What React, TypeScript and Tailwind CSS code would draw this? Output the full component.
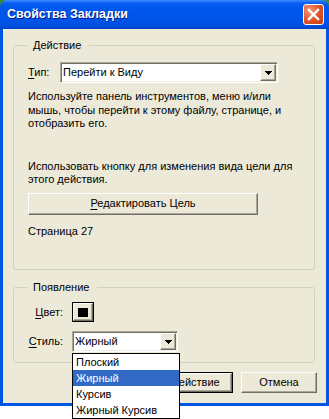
import type { ReactNode } from "react"

const raised =
  "border border-t-white border-l-white border-b-[#716F64] border-r-[#716F64] shadow-[inset_-1px_-1px_#ACA899] bg-[#ECE9D8]"
const sunken =
  "border border-t-[#ACA899] border-l-[#ACA899] border-b-white border-r-white shadow-[inset_1px_1px_#716F64,inset_-1px_-1px_#F1EFE2]"

const DownArrow = () => (
  <svg width="7" height="4" viewBox="0 0 7 4" shapeRendering="crispEdges" fill="#000">
    <rect x="0" y="0" width="7" height="1" />
    <rect x="1" y="1" width="5" height="1" />
    <rect x="2" y="2" width="3" height="1" />
    <rect x="3" y="3" width="1" height="1" />
  </svg>
)

const ComboBox = ({ value, className }: { value: string; className: string }) => (
  <div className={`${sunken} flex bg-white ${className}`}>
    <span className="flex flex-1 items-center pl-[2px]">{value}</span>
    <span className={`${raised} my-[1px] mr-[1px] flex w-[16px] items-center justify-center`}>
      <DownArrow />
    </span>
  </div>
)

// group box: the caption sits on the top border line
const GroupBox = ({ title, className, children }: { title: string; className: string; children: ReactNode }) => (
  <div className={`mr-[2px] rounded-[3px] border border-[#D0D0BF] pl-[14px] ${className}`}>
    <div className="-ml-[1px] -mt-[7px] w-fit bg-[#ECE9D8] pl-[6px] pr-[8px] leading-[13px]">{title}</div>
    {children}
  </div>
)

const Accel = ({ children }: { children: string }) => <span className="underline underline-offset-[2px]">{children}</span>

export default function App() {
  return (
    <div className="relative h-[419px] w-[329px] overflow-hidden bg-[linear-gradient(#3d8c34_0_8px,#ffffff_8px)] font-['Liberation_Sans',Arial,sans-serif] text-[11px] leading-[13px] text-black">
      <div className="flex flex-col">
        <div className="flex h-[29px] items-center rounded-t-[7px] bg-[linear-gradient(180deg,#3b8dff_0px,#0a61f2_3px,#0058ee_6px,#0055ea_60%,#0050e2_88%,#0043c9_100%)] pl-[7px] pr-[5px]">
          <span className="text-[12.5px] font-bold text-white [text-shadow:1px_1px_#0a1883]">Свойства Закладки</span>
          <span className="ml-auto flex h-[21px] w-[21px] items-center justify-center rounded-[3px] border border-white bg-[radial-gradient(circle_at_30%_30%,#f39a78,#dd5226_55%,#c13a12)]">
            <svg width="13" height="13" viewBox="0 0 13 13">
              <path d="M2 2 11 11M11 2 2 11" stroke="#fff" strokeWidth="2.4" strokeLinecap="square" />
            </svg>
          </span>
        </div>

        <div className="border-x-[3px] border-b-[3px] border-[#0055e5] bg-[#ECE9D8] pb-[10px] pl-[10px] pr-[9px] pt-[16px]">
          <GroupBox title="Действие" className="pb-[31px]">
            <div className="mt-[10px] flex items-center">
              <span className="w-[32px]">
                <Accel>Т</Accel>ип:
              </span>
              <ComboBox value="Перейти к Виду" className="h-[21px] w-[218px]" />
            </div>
            <p className="mt-[7px] whitespace-nowrap leading-[13.5px]">
              Используйте панель инструментов, меню и/или
              <br />
              мышь, чтобы перейти к этому файлу, странице, и
              <br />
              отобразить его.
            </p>
            <p className="mt-[29px] whitespace-nowrap leading-[13.5px]">
              Использовать кнопку для изменения вида цели для
              <br />
              этого действия.
            </p>
            <div className={`${raised} mt-[6px] flex h-[22px] w-[230px] items-center justify-center`}>
              <span>
                <Accel>Р</Accel>едактировать Цель
              </span>
            </div>
            <p className="mt-[10px] leading-[13.5px]">Страница 27</p>
          </GroupBox>

          <GroupBox title="Появление" className="mt-[17px] pb-[10px]">
            <div className="mt-[8px] flex items-center">
              <span className="w-[44px] pr-[9px] text-right">
                <Accel>Ц</Accel>вет:
              </span>
              <div className="flex h-[20px] w-[22px] border border-black">
                <div className={`${raised} flex flex-1 items-center justify-center`}>
                  <span className="h-[9px] w-[10px] bg-black" />
                </div>
              </div>
            </div>
            <div className="mt-[9px] flex items-center">
              <span className="w-[44px] pr-[9px] text-right">
                <Accel>С</Accel>тиль:
              </span>
              <ComboBox value="Жирный" className="h-[21px] w-[106px]" />
            </div>
          </GroupBox>

          <div className="mt-[9px] flex justify-end gap-[8px]">
            <div className="flex h-[21px] w-[75px] border border-black">
              <div className={`${raised} flex flex-1 items-center justify-center`}>Действие</div>
            </div>
            <div className={`${raised} flex h-[21px] w-[76px] items-center justify-center`}>Отмена</div>
          </div>
        </div>
      </div>

      <div className="absolute left-[72px] top-[353px] w-[108px] border border-black bg-white">
        {["Плоский", "Жирный", "Курсив", "Жирный Курсив"].map((item) => (
          <div
            key={item}
            className={`flex h-[16px] items-center pl-[3px] ${item === "Жирный" ? "bg-[#316AC5] text-white" : ""}`}
          >
            {item}
          </div>
        ))}
      </div>
    </div>
  )
}
